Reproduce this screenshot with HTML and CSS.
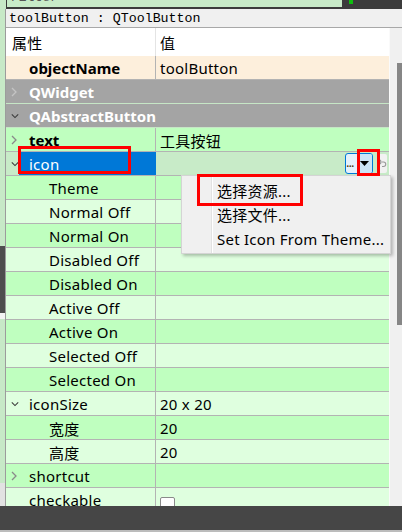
FILE: index.html
```html
<!DOCTYPE html>
<html>
<head>
<meta charset="utf-8">
<link rel="stylesheet" href="styles.css">
</head>
<body>
<div class="app">
  <div class="top">
    <div class="strip-top"></div>
    <div class="filter"><span class="filter-text">Filter</span></div>
    <div class="top-right"><span class="led"></span></div>
  </div>
  <div class="main">
    <div class="strip"></div>
    <div class="panel">
      <div class="classbar">toolButton : QToolButton</div>
      <div class="body">
        <div class="table">
          <div class="row header"><div class="name hname">属性</div><div class="val">值</div></div>
          <div class="row peach"><div class="name"><span class="arrow"></span><span class="label bold">objectName</span></div><div class="val">toolButton</div></div>
          <div class="row cls"><div class="name"><span class="arrow"><svg width="6" height="10" viewBox="0 0 6 10"><polyline points="1,1 5,5 1,9" fill="none" stroke="#c4c4c4" stroke-width="1.3"/></svg></span><span class="label bold">QWidget</span></div><div class="val"></div></div>
          <div class="row cls"><div class="name"><span class="arrow"><svg width="10" height="6" viewBox="0 0 10 6"><polyline points="1,1 5,5 9,1" fill="none" stroke="#3a3a3a" stroke-width="1.3"/></svg></span><span class="label bold">QAbstractButton</span></div><div class="val"></div></div>
          <div class="row g1"><div class="name"><span class="arrow"><svg width="6" height="10" viewBox="0 0 6 10"><polyline points="1,1 5,5 1,9" fill="none" stroke="#8a8a8a" stroke-width="1.3"/></svg></span><span class="label bold">text</span></div><div class="val">工具按钮</div></div>
          <div class="row sel"><div class="name"><span class="arrow"><svg width="10" height="6" viewBox="0 0 10 6"><polyline points="1,1 5,5 9,1" fill="none" stroke="#3a3a3a" stroke-width="1.3"/></svg></span><span class="label selected">icon</span></div><div class="val editor"><span class="dd"><span class="dots">...</span><span class="ddarrow"><svg width="9" height="5" viewBox="0 0 9 5"><polygon points="0,0 9,0 4.5,5" fill="#000"/></svg></span></span><span class="reset"><svg width="9" height="9" viewBox="0 0 9 9"><path d="M3 1 L1 3 L3 5 M1 3 H5.5 A2 2 0 0 1 5.5 7.5 H4" fill="none" stroke="#9a9a9a" stroke-width="1.1"/></svg></span></div></div>
          <div class="row g1 sub"><div class="name">Theme</div><div class="val"></div></div>
          <div class="row g2 sub"><div class="name">Normal Off</div><div class="val"></div></div>
          <div class="row g1 sub"><div class="name">Normal On</div><div class="val"></div></div>
          <div class="row g2 sub"><div class="name">Disabled Off</div><div class="val"></div></div>
          <div class="row g1 sub"><div class="name">Disabled On</div><div class="val"></div></div>
          <div class="row g2 sub"><div class="name">Active Off</div><div class="val"></div></div>
          <div class="row g1 sub"><div class="name">Active On</div><div class="val"></div></div>
          <div class="row g2 sub"><div class="name">Selected Off</div><div class="val"></div></div>
          <div class="row g1 sub"><div class="name">Selected On</div><div class="val"></div></div>
          <div class="row g2"><div class="name"><span class="arrow"><svg width="10" height="6" viewBox="0 0 10 6"><polyline points="1,1 5,5 9,1" fill="none" stroke="#3a3a3a" stroke-width="1.3"/></svg></span><span class="label">iconSize</span></div><div class="val">20 x 20</div></div>
          <div class="row g1 sub"><div class="name">宽度</div><div class="val">20</div></div>
          <div class="row g2 sub"><div class="name">高度</div><div class="val">20</div></div>
          <div class="row g1"><div class="name"><span class="arrow"><svg width="6" height="10" viewBox="0 0 6 10"><polyline points="1,1 5,5 1,9" fill="none" stroke="#8a8a8a" stroke-width="1.3"/></svg></span><span class="label">shortcut</span></div><div class="val"></div></div>
          <div class="row g2"><div class="name"><span class="arrow"></span><span class="label">checkable</span></div><div class="val"><span class="check"></span></div></div>
        </div>
        <div class="scroll"><div class="thumb"></div></div>
      </div>
    </div>
  </div>
  <div class="bottom"></div>

  <div class="menu">
    <div class="item">选择资源...</div>
    <div class="item">选择文件...</div>
    <div class="item">Set Icon From Theme...</div>
  </div>
  <div class="mark mark-icon"></div>
  <div class="mark mark-arrow"></div>
  <div class="mark mark-item"></div>
</div>
</body>
</html>
```

FILE: styles.css
```css
* { box-sizing: border-box; }
html, body { margin: 0; padding: 0; }
body {
  width: 402px;
  height: 532px;
  overflow: hidden;
  font-family: "Noto Sans", "Noto Sans CJK SC", sans-serif;
  font-size: 15px;
  letter-spacing: 0.25px;
  color: #000;
  background: #f0f0f0;
}
.app {
  position: relative;
  width: 402px;
  height: 532px;
  display: flex;
  flex-direction: column;
}
.top {
  height: 9px;
  display: flex;
  background: #3c3c3c;
  flex: none;
}
.strip-top { width: 6px; background: #c7e9c7; }
.filter {
  width: 335px;
  height: 7px;
  margin-left: 1px;
  background: #c8ebc8;
  overflow: hidden;
  font-family: "Liberation Mono", monospace;
  font-size: 13px;
  letter-spacing: 0;
  color: #555;
  padding-left: 4px;
}
.filter-text { display: block; margin-top: -9px; line-height: 14px; }
.top-right { flex: 1; padding-left: 7px; }
.led { display: block; width: 4px; height: 4px; background: #10c010; }

.main {
  flex: 1;
  display: flex;
  overflow: hidden;
  min-height: 0;
}
.strip {
  width: 5px;
  flex: none;
  background: linear-gradient(to bottom, #c7e9c7 0, #c7e9c7 237px, #4e4e4e 237px, #4e4e4e 304px, #f4f4f4 304px, #f4f4f4 310px, #c7e9c7 310px, #c7e9c7 474px, #e2e2e2 474px);
}
.panel {
  flex: 1;
  display: flex;
  flex-direction: column;
  border-left: 1px solid #9c9c9c;
  min-width: 0;
}
.classbar {
  height: 19px;
  flex: none;
  background: #f0f0f0;
  border-bottom: 1px solid #a8a8a8;
  font-family: "Liberation Mono", monospace;
  font-size: 13.3px;
  letter-spacing: 0;
  line-height: 18px;
  padding-top: 1px;
  padding-left: 3px;
  white-space: nowrap;
}
.body {
  flex: 1;
  display: flex;
  min-height: 0;
}
.table {
  width: 383px;
  flex: none;
  display: flex;
  flex-direction: column;
}
.scroll {
  flex: 1;
  background: #f0f0f0;
  border-left: 1px solid #fafafa;
  display: flex;
  justify-content: flex-end;
}
.thumb {
  width: 5px;
  height: 262px;
  margin-top: 35px;
  background: #868686;
}
.row {
  height: 24px;
  flex: none;
  display: flex;
  border-bottom: 1px solid #b3b3b3;
  white-space: nowrap;
}
.row .name {
  width: 150px;
  flex: none;
  display: flex;
  align-items: center;
  padding-left: 5px;
  padding-top: 1px;
  border-right: 1px solid #b3b3b3;
}
.row .val {
  flex: 1;
  display: flex;
  align-items: center;
  padding-left: 4px;
  padding-top: 1px;
}
.row.sub .name { padding-left: 43px; }
.arrow {
  width: 8px;
  height: 100%;
  flex: none;
  display: flex;
  align-items: center;
}
.label {
  flex: 1;
  height: 100%;
  display: flex;
  align-items: center;
  padding-left: 10px;
}
.bold { font-weight: bold; letter-spacing: 0; }

.header {
  height: 28px;
  background: #fff;
  border-bottom: none;
}
.header .name { padding-left: 6px; border-right: 1px solid #e4e4e4; }
.header .val { padding-left: 4px; }

.peach { background: #fdefdc; }
.cls { background: #a4a4a4; color: #fff; border-bottom-color: #c6e6c6; }
.cls .name { border-right: none; }
.g1 { background: #bfffbf; }
.g2 { background: #dfffdf; }
.sel { background: #c8ebc8; }
.sel .name { border-right: none; padding-top: 0; }
.label.selected { background: #0078d7; color: #fff; padding-top: 1px; }

.editor { justify-content: flex-end; padding-right: 2px; gap: 5px; }
.row .val.editor { padding-top: 0; }
.dd {
  width: 28px;
  height: 21px;
  display: flex;
  border: 1px solid #0078d7;
  border-radius: 3px;
  background: #e5f1fb;
  overflow: hidden;
}
.dots {
  width: 11px;
  font-size: 13px;
  line-height: 17px;
  letter-spacing: -1px;
  color: #4a3000;
}
.ddarrow {
  flex: 1;
  display: flex;
  align-items: center;
  justify-content: center;
  background: #cce4f7;
}
.reset {
  width: 9px;
  height: 19px;
  display: flex;
  align-items: center;
  justify-content: center;
  background: #f2f2f2;
  border-radius: 2px;
}
.check {
  display: block;
  width: 15px;
  height: 15px;
  margin-top: 8px;
  background: #fff;
  border: 1px solid #8a8a8a;
  border-radius: 2px;
}

.bottom {
  height: 26px;
  flex: none;
  background: #464646;
  border-bottom: 2px solid #bcbcbc;
}

.menu {
  position: absolute;
  left: 181px;
  top: 175px;
  width: 210px;
  height: 79px;
  background: #f0f0f0;
  border: 1px solid #d4d4d4;
  box-shadow: 2px 2px 3px rgba(0,0,0,0.25);
  padding-top: 3px;
  background-image: linear-gradient(to right, transparent 29px, #e2e2e2 29px, #e2e2e2 30px, #ffffff 30px, #ffffff 31px, transparent 31px);
}
.item {
  height: 24px;
  line-height: 24px;
  padding-left: 35px;
  white-space: nowrap;
}
.mark {
  position: absolute;
  border: 3px solid #ff0000;
}
.mark-icon { left: 18px; top: 146px; width: 113px; height: 28px; }
.mark-arrow { left: 357px; top: 149px; width: 23px; height: 27px; }
.mark-item { left: 197px; top: 174px; width: 106px; height: 32px; }
```
